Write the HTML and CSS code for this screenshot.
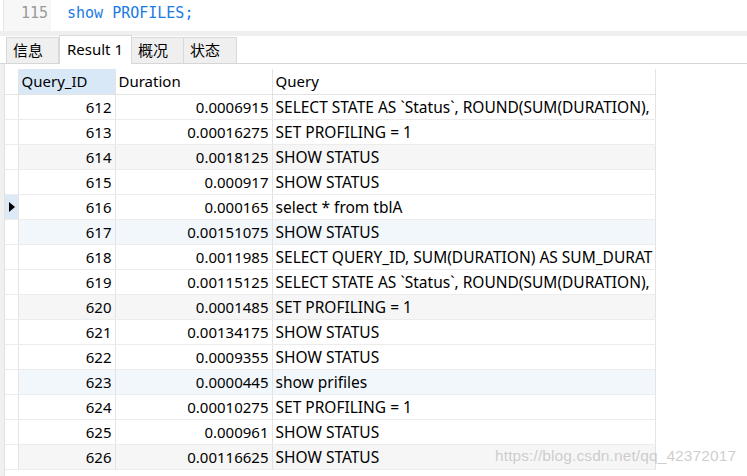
FILE: index.html
```html
<!DOCTYPE html>
<html>
<head>
<meta charset="utf-8">
<link rel="stylesheet" href="styles.css">
</head>
<body>
<div class="editor">
  <div class="gutter">115</div>
  <div class="code">show PROFILES;</div>
</div>
<div class="band"></div>
<div class="tabs">
  <div class="tab">信息</div>
  <div class="tab active">Result 1</div>
  <div class="tab">概况</div>
  <div class="tab">状态</div>
</div>
<div class="content">
  <div class="strip"></div>
  <div class="gridwrap">
    <table class="grid">
      <thead>
        <tr><th class="ind hd"></th><th class="c1 sel">Query_ID</th><th class="c2">Duration</th><th class="c3">Query</th></tr>
      </thead>
      <tbody>
        <tr><td class="ind"></td><td class="num">612</td><td class="num">0.0006915</td><td class="q">SELECT STATE AS `Status`, ROUND(SUM(DURATION),</td></tr>
        <tr><td class="ind"></td><td class="num">613</td><td class="num">0.00016275</td><td class="q">SET PROFILING = 1</td></tr>
        <tr class="gray"><td class="ind"></td><td class="num">614</td><td class="num">0.0018125</td><td class="q">SHOW STATUS</td></tr>
        <tr><td class="ind"></td><td class="num">615</td><td class="num">0.000917</td><td class="q">SHOW STATUS</td></tr>
        <tr><td class="ind cur"><span class="arrow"></span></td><td class="num">616</td><td class="num">0.000165</td><td class="q">select * from tblA</td></tr>
        <tr class="blue"><td class="ind"></td><td class="num">617</td><td class="num">0.00151075</td><td class="q">SHOW STATUS</td></tr>
        <tr><td class="ind"></td><td class="num">618</td><td class="num">0.0011985</td><td class="q">SELECT QUERY_ID, SUM(DURATION) AS SUM_DURAT</td></tr>
        <tr><td class="ind"></td><td class="num">619</td><td class="num">0.00115125</td><td class="q">SELECT STATE AS `Status`, ROUND(SUM(DURATION),</td></tr>
        <tr class="gray"><td class="ind"></td><td class="num">620</td><td class="num">0.0001485</td><td class="q">SET PROFILING = 1</td></tr>
        <tr><td class="ind"></td><td class="num">621</td><td class="num">0.00134175</td><td class="q">SHOW STATUS</td></tr>
        <tr><td class="ind"></td><td class="num">622</td><td class="num">0.0009355</td><td class="q">SHOW STATUS</td></tr>
        <tr class="blue"><td class="ind"></td><td class="num">623</td><td class="num">0.0000445</td><td class="q">show prifiles</td></tr>
        <tr><td class="ind"></td><td class="num">624</td><td class="num">0.00010275</td><td class="q">SET PROFILING = 1</td></tr>
        <tr><td class="ind"></td><td class="num">625</td><td class="num">0.000961</td><td class="q">SHOW STATUS</td></tr>
        <tr class="gray"><td class="ind"></td><td class="num">626</td><td class="num">0.00116625</td><td class="q">SHOW STATUS</td></tr>
      </tbody>
    </table>
  </div>
</div>
<div class="watermark">https://blog.csdn.net/qq_42372017</div>
</body>
</html>
```

FILE: styles.css
```css
* { box-sizing: border-box; }
html, body {
  margin: 0;
  padding: 0;
  width: 747px;
  height: 476px;
  overflow: hidden;
  background: #fff;
  font-family: "Noto Sans", "Noto Sans CJK SC", sans-serif;
  color: #000;
  position: relative;
}
.editor {
  height: 31px;
  display: flex;
  align-items: center;
}
.gutter {
  width: 48px;
  height: 31px;
  background: #f7f7f7;
  border-left: 1px solid #e6e6e6;
  margin-left: 3px;
  color: #999;
  font-family: "DejaVu Sans Mono", monospace;
  font-size: 15px;
  line-height: 27px;
  padding-left: 17px;
}
.code {
  padding-left: 16px;
  font-family: "DejaVu Sans Mono", monospace;
  font-size: 15px;
  color: #1a7ae6;
  line-height: 27px;
  align-self: flex-start;
}
.band {
  height: 5px;
  background: #efefef;
}
.tabs {
  height: 28px;
  display: flex;
  align-items: flex-end;
  padding-left: 6px;
  border-bottom: 1px solid #d6d6d6;
}
.tab {
  height: 26px;
  background: #efefef;
  border: 1px solid #d9d9d9;
  border-bottom: none;
  font-size: 15px;
  line-height: 24px;
  padding: 0 6px;
  width: 53px;
}
.tab + .tab { border-left: none; }
.tab.active {
  background: #fff;
  height: 29px;
  width: 73px;
  padding: 0 7px;
  line-height: 27px;
  margin-bottom: -1px;
  border-left: 1px solid #d9d9d9;
}
.tab.active + .tab { border-left: none; width: 52px; }
.content {
  display: flex;
  height: 412px;
}
.strip {
  width: 5px;
  background: #f0f0f0;
  border-right: 1px solid #e2e2e2;
}
.gridwrap {
  padding-top: 5px;
}
.grid {
  border-collapse: collapse;
  font-size: 15px;
  table-layout: fixed;
}
.grid th, .grid td {
  height: 25px;
  padding: 0 3px;
  white-space: nowrap;
  overflow: hidden;
  border-right: 1px solid #e3e3e3;
  border-bottom: 1px solid #ececec;
  font-weight: normal;
  text-align: left;
  line-height: 24px;
}
.grid th { border-bottom: 1px solid #e3e3e3; }
.ind { width: 13px; padding: 0 !important; }
.c1 { width: 97px; }
.c2 { width: 157px; }
.c3 { width: 383px; }
.sel { background: #d9e8f7; }
.num { text-align: right !important; }
.q { padding-left: 3px; text-overflow: clip; max-width: 383px; font-size: 15.5px; }
tr.gray td { background: #f6f6f6; }
tr.blue td { background: #f2f7fc; }
tr.gray td.ind, tr.blue td.ind { background: #fff; }
.ind.cur { background: #dde9f6 !important; }
.arrow {
  display: block;
  width: 0;
  height: 0;
  margin-left: 4px;
  border-top: 5px solid transparent;
  border-bottom: 5px solid transparent;
  border-left: 6px solid #000;
}
.watermark {
  position: absolute;
  left: 495px;
  top: 447px;
  font-family: "Liberation Sans", Arial, sans-serif;
  font-size: 15.5px;
  color: rgba(190, 190, 190, 0.75);
  letter-spacing: 0.1px;
}
```
